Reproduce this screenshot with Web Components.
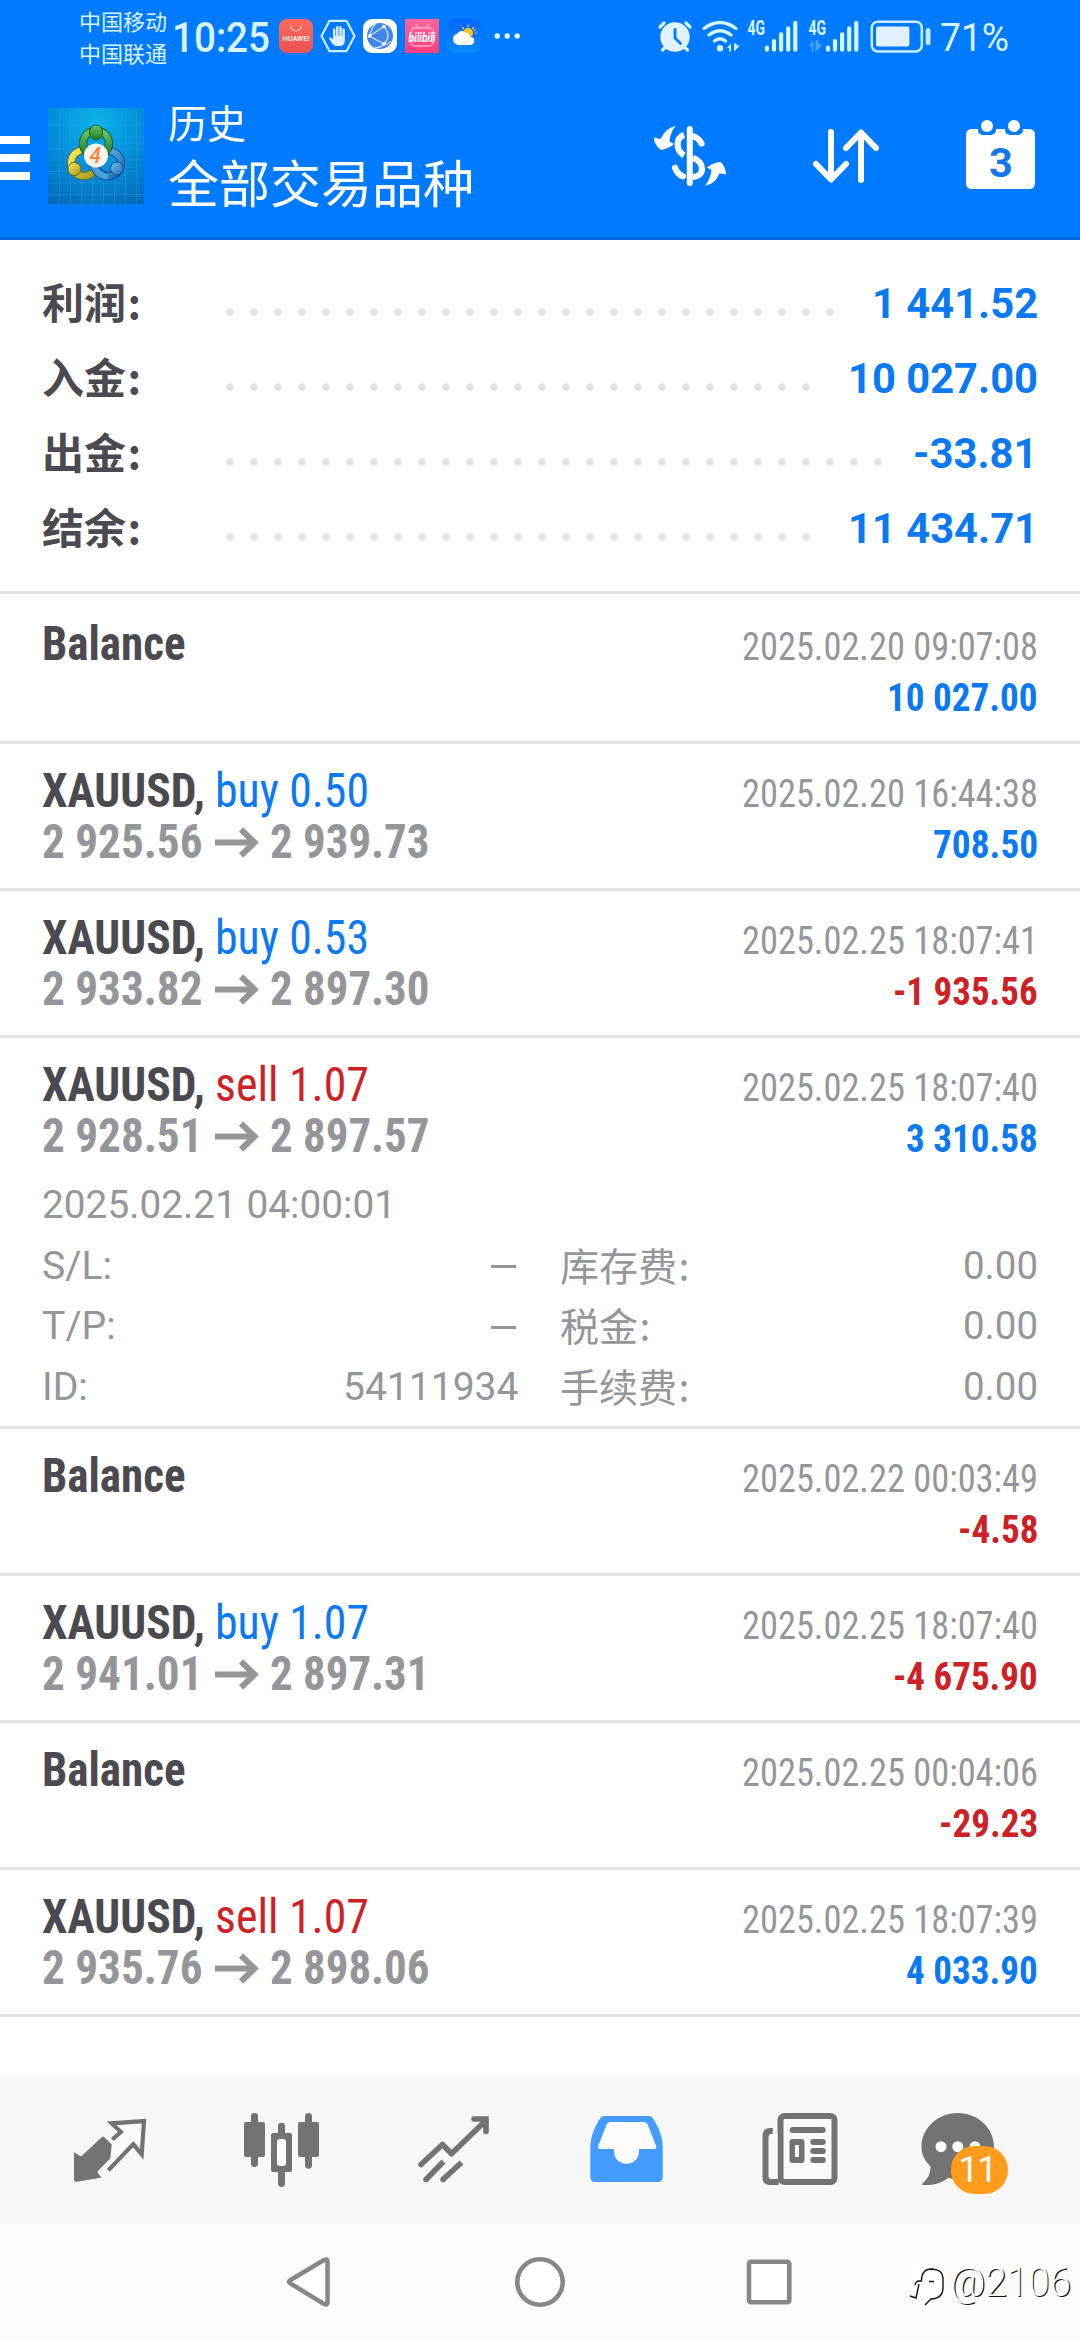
<!DOCTYPE html>
<html lang="zh-CN">
<head>
<meta charset="utf-8">
<title>历史</title>
<style>
html,body{margin:0;padding:0;background:#fff}
body{width:1080px;height:2340px;overflow:hidden;font-family:Roboto,"Noto Sans CJK SC",sans-serif;color:#4b4a50}
</style>
</head>
<body>
<history-app></history-app>
<script>
const def=(name,html,after)=>customElements.define(name,class extends HTMLElement{
  connectedCallback(){
    if(this.shadowRoot)return;
    this.attachShadow({mode:'open'}).innerHTML=typeof html==='function'?html(this):html;
    if(after)after(this);
  }
});

/* Text squeezed horizontally to the advance width given in "w". */
def('fit-text',`<style>
:host{display:block;white-space:pre;flex:none}
span{display:inline-block;transform-origin:0 50%;vertical-align:top}
</style><span><slot></slot></span>`,el=>{
  const s=el.shadowRoot.querySelector('span'),w=+el.getAttribute('w');
  const n=s.getBoundingClientRect().width;
  el.style.width=w+'px';
  s.style.transform=`scaleX(${w/n})`;
});

const bars=x=>[[45.5,0],[39,7.1],[32.3,14.2],[26.3,21.3],[20.7,28.4]].map(([y,d])=>
  `<rect x="${x+d}" y="${y}" width="4.2" height="${51.7-y}" rx="2"/>`).join('');
const S='fill="none" stroke-linecap="round" stroke-linejoin="round"';
const ICONS={
appstore:['279 19 34 34',`<defs><linearGradient id="g" x2="0" y2="1"><stop stop-color="#fa6a5c"/><stop offset="1" stop-color="#ea5355"/></linearGradient></defs><rect x="279" y="19" width="34" height="34" rx="8" fill="url(#g)"/><path d="M290.5 25.5a5.5 5.5 0 0 0 11 0" ${S} stroke="#ffc9c4" stroke-width="1.2"/><text x="282.6" y="40.8" font-size="6.4" font-weight="700" fill="#ffe9e6" textLength="27" lengthAdjust="spacingAndGlyphs">HUAWEI</text>`],
hand:['320 18 36 36',`<path d="M329.5 20.8h17l8 15.2-8 15.2h-17l-8-15.2z" ${S} stroke="#cfeaff" stroke-width="2.2"/><g ${S} stroke="#dff1ff" stroke-width="2.4"><path d="M334.2 29.500v9M337.300 27.300v10M340.500 27.300v10M343.600 29.500v10"/></g><path d="M333 36h11.800v4.500q0 4.500-4 5.500h-5q-3-.5-7-8 1.200-1.800 4.200 1.500z" fill="#dff1ff"/>`],
globe:['363 19 34 34',`<rect x="363" y="19" width="34" height="34" rx="9" fill="#fff"/><circle cx="380" cy="36" r="13" fill="#3f86e8"/><g fill="none" stroke="#d6e8ff" stroke-width="1.1"><path d="M369.500 36L384 26.500M369.500 36L384 44M384 26.500q8 9 0 17.500M376 24q-4 2-6.500 12M384 44q-5 5-9 3M384 44q4 1 7-3"/></g><circle cx="369.500" cy="36" r="1.800" fill="#fff"/><circle cx="384" cy="26.500" r="1.800" fill="#fff"/><circle cx="384" cy="44" r="1.800" fill="#fff"/>`],
bili:['405 19 34 34',`<defs><linearGradient id="g" x2="0" y2="1"><stop stop-color="#f7679c"/><stop offset="1" stop-color="#fb3c7c"/></linearGradient></defs><rect x="405" y="19" width="34" height="34" fill="url(#g)"/><rect x="411" y="28" width="22" height="18" rx="4" fill="none" stroke="#fb96ba" stroke-width="1.800"/><path d="M416 25l3 3M428 25l-3 3" ${S} stroke="#fb96ba" stroke-width="1.800"/><text x="408.500" y="41.500" font-size="13" font-weight="700" font-style="italic" fill="#fff" textLength="27" lengthAdjust="spacingAndGlyphs">bilibili</text>`],
weather:['447 19 34 34',`<defs><linearGradient id="g" x2="0" y2="1"><stop stop-color="#0563ff"/><stop offset="1" stop-color="#0a8dff"/></linearGradient></defs><rect x="447" y="19" width="34" height="34" rx="9" fill="url(#g)"/><circle cx="468" cy="33" r="5" fill="#ffc21f"/><path d="M468 25.200v1.500M473.500 27.500l-1 1M475.500 33h1M473.500 39l-.8-.8M462.500 27.500l1 1M475.200 30l-1 .4" ${S} stroke="#ffcf4d" stroke-width="1.200"/><path d="M458.500 45a5.800 5.800 0 0 1-.8-11.500c1-3 5.500-3.500 7.300-.8 3.500 0 5 2 4.800 4.300 6-.3 6 8 0 8z" fill="#fff"/>`],
more:['494 32 27 8',`<g fill="#e4f5ff"><circle cx="497.200" cy="36" r="2.700"/><circle cx="507.200" cy="36" r="2.700"/><circle cx="517.200" cy="36" r="2.700"/></g>`],
alarm:['657 19 36 35',`<circle cx="675" cy="37" r="14.700" fill="#e2f2ff"/><path d="M660 27l4-4M690 27l-4-4" ${S} stroke="#d2f5ff" stroke-width="3.200"/><path d="M662.500 50l3-3M687.500 50l-3-3" ${S} stroke="#e2f2ff" stroke-width="3.200"/><path d="M675 29.500v8.500l5.500 5.500" ${S} stroke="#007aff" stroke-width="2.800"/>`],
wifi:['701 19 38 34',`<g ${S} stroke="#d2f5ff" stroke-width="3.400"><path d="M703 28.500q16-12 32 0M708 35q11-8.500 22 0M713.500 41q5.500-4.500 11 0"/></g><circle cx="719" cy="48.300" r="3.200" fill="#d2f5ff"/><path d="M726 48l4-4.500v8h-1.800V48zM733 43.500v8l6-6h-3.500v-2z" fill="#d2f5ff"/>`],
sig1:['746 19 52 34',`<g fill="#d2f5ff"><text x="746.500" y="34.800" font-size="20" font-weight="700" textLength="17.500" lengthAdjust="spacingAndGlyphs">4G</text>${bars(763.800)}</g>`],
sig2:['807 19 52 34',`<g fill="#d2f5ff"><text x="807.500" y="34.800" font-size="20" font-weight="700" textLength="17.500" lengthAdjust="spacingAndGlyphs">4G</text>${bars(824.800)}</g><path d="M807.500 46l5-5.500v11h-2V46zM814.500 40.500v11l7-7h-4v-4z" fill="#4aa3ff"/>`],
battery:['869 19 62 35',`<rect x="870.800" y="21.700" width="50" height="29.800" rx="6" fill="none" stroke="#c9eaff" stroke-width="2.500"/><rect x="875" y="26.500" width="33.400" height="20" rx="2" fill="#e2f0ff"/><rect x="924.700" y="28" width="4.800" height="17.300" rx="2.400" fill="#c9eaff"/>`],
menu:['0 134 30 48',`<path d="M0 136h30v8H0zM0 154h30v8H0zM0 172h30v8H0z" fill="#fff"/>`],
logo:['48 108 96 96',`<defs><radialGradient id="g" cx=".5" cy=".15" r="1"><stop stop-color="#0ab4ea"/><stop offset=".45" stop-color="#0590dc"/><stop offset="1" stop-color="#0565b5"/></radialGradient>
<linearGradient id="gr" x2="0" y2="1"><stop stop-color="#72c463"/><stop offset="1" stop-color="#167a2d"/></linearGradient><linearGradient id="ye" x2="1" y2="1"><stop stop-color="#f6ee62"/><stop offset="1" stop-color="#a99312"/></linearGradient><linearGradient id="bl" x2="1" y2="1"><stop stop-color="#7fc4ee"/><stop offset="1" stop-color="#1568b4"/></linearGradient></defs>
<rect x="48" y="108" width="96" height="96" fill="url(#g)"/><path d="M59.500 108v96M70.500 108v96M81.500 108v96M92.500 108v96M103.500 108v96M114.500 108v96M125.500 108v96M136.500 108v96M48 125.500h96M48 137h96M48 148.500h96M48 160h96M48 171.500h96M48 183h96M48 194.500h96" stroke="#2aa6ea" stroke-width=".6" opacity=".6"/>
<g fill="none"><circle cx="108.500" cy="163.500" r="12.500" stroke="#0b4a8b" stroke-width="8"/><circle cx="108.500" cy="163.500" r="12.500" stroke="url(#bl)" stroke-width="6.200"/><circle cx="84" cy="163" r="13" stroke="#6d6610" stroke-width="8"/><circle cx="84" cy="163" r="13" stroke="url(#ye)" stroke-width="6.200"/><circle cx="96" cy="143.500" r="13" stroke="#0c5a28" stroke-width="8"/><circle cx="96" cy="143.500" r="13" stroke="url(#gr)" stroke-width="6.200"/><path d="M93 163q3 13 15.500 13.500" stroke="#0b4a8b" stroke-width="8"/><path d="M93 163q3 13 15.500 13.500" stroke="#4a9fdb" stroke-width="6.200"/></g>
<ellipse cx="96" cy="132.500" rx="6.500" ry="7.500" fill="url(#gr)" stroke="#0d6428"/><circle cx="74.500" cy="169" r="6.500" fill="url(#ye)" stroke="#6d6610"/><circle cx="117" cy="168.500" r="6.500" fill="url(#bl)" stroke="#0b4a8b"/>
<circle cx="96" cy="155.500" r="12" fill="#f7f3f0"/><text x="95.300" y="163" text-anchor="middle" font-size="22" font-weight="500" font-style="italic" fill="#f08a35" textLength="11.500" lengthAdjust="spacingAndGlyphs">4</text>`],
dollar:['652 124 76 64',`<g fill="#fff"><path d="M654 137.500l6.500 1.500q5-11 15-13-5.500 7-6 15.500l4.500 2.500q-5 4.500-13 6-7-5-7-12.500zM726 174.500l-6.500-1.300q-4 10.800-14.500 12.600 5.500-7 6.500-15.800l-4.500-2.500q6-5 13.500-5.500 5 4 5.500 12.500z"/><rect x="686.800" y="126" width="6" height="60" rx="3"/></g><g ${S} stroke="#fff" stroke-width="6.200"><path d="M701.500 143.500q-3.500-6.500-9.500-7.500M675 167.800q2.500 6.500 8 8.500"/><path d="M684 134.800c-8.500 3-8.500 15.500 0 20.500M693 158c12 4 12 18 0 19" stroke-linecap="butt"/></g>`],
sort:['811 127 70 58',`<g ${S} stroke="#fff" stroke-width="6"><path d="M831 132v47M816 164l15 15.500 15-15.500M861 180v-47M846 148l15-15.500 15 15.500"/></g>`],
cal:['964 118 73 73',`<rect x="966" y="129" width="69" height="60" rx="5.500" fill="#fff"/><rect x="978" y="118" width="18" height="17" rx="5" fill="#007aff"/><rect x="1005" y="118" width="18" height="17" rx="5" fill="#007aff"/><circle cx="987" cy="126" r="6" fill="#fff"/><circle cx="1014" cy="126" r="6" fill="#fff"/><text x="1001" y="176.600" text-anchor="middle" font-size="41.500" font-weight="700" fill="#1478ea">3</text>`],
arrow:['215 827 43 31',`<path d="M215 842.500h38.500M241 829.500l13.500 13-13.500 13" fill="none" stroke="#95969a" stroke-width="6"/>`],
trade:['72 2112 77 76',`<path d="M74.500 2153l6.500 4 21-19.500q1-1 2 0l12.500 12q1 1 0 2l-19 19.500q-1 1-.3 2l3.500 4.300-24.200 4q-2 .2-2-1.500z" fill="#737373" stroke="#737373" stroke-width="1" stroke-linejoin="round"/><path d="M112.300 2139.500l8.600-7.500-9.200-8.700 32.300-2.200-2.300 33.200-8.400-10.200-24.300 26.300" fill="#fafafa" stroke="none"/><path d="M112.300 2139.500l8.600-7.500-9.200-8.700 32.300-2.200-2.300 33.200-8.400-10.200-25 26.300" fill="none" stroke="#737373" stroke-width="4.200"/>`],
candles:['242 2111 79 78',`<g fill="#737373"><rect x="251" y="2113" width="7" height="54" rx="3.400"/><rect x="244" y="2122" width="21" height="35" rx="2"/><rect x="278" y="2122.700" width="7" height="64.300" rx="3.400"/><rect x="271" y="2133" width="21" height="39" rx="2"/><rect x="305" y="2113" width="7" height="55.700" rx="3.400"/><rect x="298" y="2122" width="21" height="35" rx="2"/></g><rect x="277" y="2139" width="9" height="27" rx="3" fill="#fff"/>`],
trend:['416 2114 76 72',`<g fill="none" stroke="#737373" stroke-width="5.600"><path d="M421 2164.500l21.500-20 9 9.200 34-33" stroke-linejoin="round" stroke-linecap="round"/><path d="M474 2119h12v12.500" stroke-linecap="round"/><path d="M426 2179.500l17.500-18M443 2179.500l18.500-17"/><path d="M426 2179.500h.01M443 2179.500h.01" stroke-linecap="round"/></g>`],
inbox:['588 2114 77 70',`<path d="M590.300 2148c0-12 5-22 10-30q1.500-2 4-2h44.500q2.500 0 4 2c5 8 10 18 10 30v29q0 5-5 5h-62.500q-5 0-5-5z" fill="#449cff"/><path d="M611 2122h32q3.500 0 5 3.300l8 20.500q1 3.200-2.200 3.200H639v2c0 17-25 17-25 0v-2h-13.500q-3.200 0-2.200-3.200l8-20.500q1.200-3.300 4.700-3.300z" fill="#fcfcfc"/>`],
news:['760 2111 79 76',`<path d="M773 2128l-.5 6h-1q-2.800 0-2.800 3v39q0 3 3 3h7v6h-9q-7.200 0-7.200-7v-42q0-8 7.500-8z" fill="#737373"/><rect x="780.500" y="2116" width="54" height="66" rx="4" fill="#fafafa" stroke="#737373" stroke-width="6"/><path d="M768.700 2176v-38q0-4 3-4h5.900v45h-6q-2.900 0-2.900-3z" fill="#fafafa"/><g fill="#737373"><rect x="789.700" y="2127" width="36" height="6" rx="3"/><rect x="810.300" y="2139" width="15.500" height="6" rx="3"/><rect x="810.300" y="2148" width="15.500" height="6" rx="3"/><rect x="810.300" y="2157" width="15.500" height="6" rx="3"/><rect x="789.500" y="2139" width="15" height="24" rx="3"/></g><rect x="795" y="2145" width="4" height="12" fill="#fafafa"/>`],
chat:['920 2111 90 85',`<path d="M957.800 2113c20 0 36.200 15 36.200 34 0 24-20 36.500-46 31-7 5.500-16 7.500-24.500 7q-3-.5 0-2.500 7-6 7-16c-6-6-9-12-9-19.500 0-19 16.300-34 36.300-34z" fill="#737373"/><g fill="#fff"><circle cx="941" cy="2146.700" r="5.500"/><circle cx="957.800" cy="2146.700" r="5.500"/><circle cx="975" cy="2146.700" r="5.500"/></g><rect x="950.900" y="2146" width="57" height="48" rx="23.500" fill="#ff9c1c"/><text x="978" y="2182.300" text-anchor="middle" font-size="36" fill="#fff" textLength="39" lengthAdjust="spacing">11</text>`],
back:['286 2256 45 52',`<path d="M290.500 2280l33.500-20q3.500-1.500 3.500 1.500v41q0 3-3.500 1.500l-33.500-20.500q-3-1.800 0-3.500z" fill="#fff" stroke="#878787" stroke-width="4.500"/>`],
home:['514 2256 52 52',`<circle cx="540" cy="2282" r="22.700" fill="#fff" stroke="#878787" stroke-width="4.600"/>`],
recent:['745 2258 48 48',`<rect x="749" y="2261.700" width="40.300" height="40.600" rx="2" fill="#fff" stroke="#878787" stroke-width="4.600"/>`],
mark:['905 2260 42 48',`<rect x="907" y="2262" width="37" height="38" rx="15" fill="#fff"/><g fill="none" stroke="#111" stroke-width="1.400"><path d="M915 2285q1-4 4-4h2.500q0-12 10-12h2.500M919 2284l-3 14-6-2M931 2269.500q12-1 12 10v8q0 11-12 11.500l-6 6M929 2281.500h5"/></g>`]
};
def('app-icon',el=>{
  const [vb,body]=ICONS[el.getAttribute('name')],[,,w,h]=vb.split(' ');
  return `<style>:host{display:block;flex:none;width:${w}px;height:${h}px}svg{display:block;overflow:visible;font-family:Roboto,sans-serif}</style><svg width="${w}" height="${h}" viewBox="${vb}">${body}</svg>`;
});

def('status-bar',`<style>
:host{display:flex;height:72px;color:#d8f3ff;align-items:flex-start;box-sizing:border-box;padding:0 71px 0 79px}
.car{font:400 22px/32px "Noto Sans CJK SC",sans-serif;padding-top:4px}
.t{font:500 42px/50px Roboto,sans-serif;padding-top:13px;margin-left:5px}
.icons{display:flex;gap:8px;padding-top:19px;margin-left:9px}
.hand{margin:-1px}
.more{margin:13px 0 0 5px}
.right{display:flex;margin-left:auto;padding-top:19px;gap:9px}
.p{font:400 38.5px/44px Roboto,sans-serif;margin:-3px 0 0 0}
</style>
<div class="car"><fit-text w="88">中国移动</fit-text><fit-text w="88">中国联通</fit-text></div>
<fit-text class="t" w="98">10:25</fit-text>
<div class="icons"><app-icon name="appstore"></app-icon><app-icon class="hand" name="hand"></app-icon><app-icon name="globe"></app-icon><app-icon name="bili"></app-icon><app-icon name="weather"></app-icon><app-icon class="more" name="more"></app-icon></div>
<div class="right"><app-icon name="alarm"></app-icon><app-icon name="wifi" style="margin-right:-2px"></app-icon><app-icon name="sig1"></app-icon><app-icon name="sig2"></app-icon><app-icon name="battery" style="margin-left:1px;margin-right:-1px"></app-icon><fit-text class="p" w="69">71%</fit-text></div>`);

def('title-bar',`<style>
:host{display:flex;height:165px;padding-top:0;color:#fff}
.logo{margin:36px 0 0 18px}.menu{margin-top:62px}
.txt{margin-left:24px;display:flex;flex-direction:column}
.a{font:400 39px/44px "Noto Sans CJK SC",sans-serif;margin-top:27px}
.b{font:400 51px/60px "Noto Sans CJK SC",sans-serif;margin-top:8px}
.acts{margin-left:auto;display:flex;gap:83px;padding-right:43px;align-items:flex-start}
</style>
<app-icon class="menu" name="menu"></app-icon><app-icon class="logo" name="logo"></app-icon>
<div class="txt"><div class="a">历史</div><div class="b">全部交易品种</div></div>
<div class="acts"><app-icon name="dollar" style="margin-top:52px"></app-icon><app-icon name="sort" style="margin-top:55px"></app-icon><app-icon name="cal" style="margin-top:46px"></app-icon></div>`);

/* Advance width of a number: digit, period, space and hyphen each have their own. */
const advance=(t,d,p,s,h)=>[...t].reduce((a,c)=>a+(c==='.'?p:c===' '?s:c==='-'?h:d),0);

def('summary-row',el=>{
  const v=el.getAttribute('value');
  return `<style>
:host{display:flex;height:75px;align-items:center;padding:0 42px}
.l{width:176px;height:75px;font:700 42px/70px "Noto Sans CJK SC",sans-serif;color:#4b4a50}
.c{margin-left:1.5px}
.d{width:${24*el.getAttribute('dots')}px;height:8px;margin-top:16px;background:radial-gradient(circle at 12px 4px,#e4e4e4 3.400px,transparent 4.200px) 0 0/24px 8px}
.v{margin-left:auto;font:700 42px/75px Roboto,sans-serif;color:#0a79f2}
</style><div class="l">${el.getAttribute('label')}<span class="c">:</span></div><div class="d"></div><fit-text class="v" w="${advance(v,23.9,12.5,10.2,16.5)}">${v}</fit-text>`;
});

def('deal-row',el=>{
  const g=n=>el.getAttribute(n),amt=g('amount'),side=g('side');
  return `<style>
:host{display:block;border-bottom:3px solid #e4e4e4}
.m{height:144px;display:flex;justify-content:space-between;padding:0 42px;box-sizing:border-box}
.l{padding-top:21px;font-stretch:75%;font-size:48px;line-height:51px;font-weight:700;color:#4b4a50}
.x,.y{display:flex;height:51px}.y{color:#95969a;align-items:center}
.side{font-weight:400;margin-left:9.500px;color:${side==='buy'?'#0a79f2':'#cc2226'}}
app-icon{margin:2px 12.500px 0 12px}
.r{padding-top:24px;font-stretch:75%;font-size:39.500px;line-height:51px;color:#95969a;display:flex;flex-direction:column;align-items:flex-end}
.amt{font-weight:700;color:${amt[0]==='-'?'#cc2226':'#0a79f2'}}
</style><div class="m"><div class="l">${side?`<div class="x"><fit-text w="163">XAUUSD,</fit-text><fit-text class="side" w="154">${side} ${g('lots')}</fit-text></div><div class="y"><fit-text w="160.500">${g('open')}</fit-text><app-icon name="arrow"></app-icon><fit-text w="159.500">${g('close')}</fit-text></div>`:`<fit-text w="143.500">Balance</fit-text>`}</div>
<div class="r"><fit-text w="296">${g('time')}</fit-text><fit-text class="amt" w="${advance(amt,18.9,10.7,7.6,13)}">${amt}</fit-text></div></div><slot></slot>`;
});

def('deal-details',`<style>
:host{display:flex;flex-direction:column;padding:0 42px;height:244px;box-sizing:border-box;font-size:39.200px;line-height:60.500px;color:#95969a;font-weight:400}
.date{margin-top:-7px}
.g{display:grid;grid-template-columns:476px 478px;gap:0 42px}
.g div{display:flex;justify-content:space-between;height:60.500px}
.cn{font-family:"Noto Sans CJK SC",sans-serif;font-size:39px;line-height:57px}
.cn i{margin-left:1.500px;font-style:normal}
.n{width:25.500px;height:3px;background:#95969a;margin:29.500px 2px 0 0}
</style><fit-text class="date" w="354">2025.02.21 04:00:01</fit-text>
<div class="g">
<div><span>S/L:</span><b class="n"></b></div><div><span class="cn">库存费<i>:</i></span><fit-text w="75">0.00</fit-text></div>
<div><span>T/P:</span><b class="n"></b></div><div><span class="cn">税金<i>:</i></span><fit-text w="75">0.00</fit-text></div>
<div><span>ID:</span><fit-text w="175.500">54111934</fit-text></div><div><span class="cn">手续费<i>:</i></span><fit-text w="75">0.00</fit-text></div>
</div>`);

def('tab-bar',`<style>
:host{display:flex;height:147px;background:#f7f7f7;padding:0 70px 0 72px;box-sizing:border-box;justify-content:flex-start;align-items:flex-start}
</style>
<app-icon name="trade" style="margin-top:35px"></app-icon><app-icon name="candles" style="margin:34px 0 0 93px"></app-icon><app-icon name="trend" style="margin:37px 0 0 95px"></app-icon><app-icon name="inbox" style="margin:37px 0 0 96px"></app-icon><app-icon name="news" style="margin:34px 0 0 95px"></app-icon><app-icon name="chat" style="margin:34px 0 0 81px"></app-icon>`);

def('nav-bar',`<style>
:host{display:flex;height:116px;background:#fcfcfc;padding-left:286px;align-items:flex-start}
.w{font:300 41px/50px Roboto,sans-serif;color:#fff;text-shadow:1.200px .8px 0 #111;margin:33px 0 0 3px}
</style>
<app-icon name="back" style="margin-top:32px"></app-icon><app-icon name="home" style="margin:32px 0 0 183px"></app-icon><app-icon name="recent" style="margin:34px 0 0 179px"></app-icon><app-icon name="mark" style="margin:36px 0 0 112px"></app-icon><fit-text class="w" w="121">@2106</fit-text>`);

def('history-app',`<style>
:host{display:flex;flex-direction:column;width:1080px;height:2340px;background:#fff}
header{background:#007aff;border-bottom:3px solid #0069de;height:237px}
.sum{padding:26px 0 25px;border-bottom:3px solid #e4e4e4}
main{flex:1;padding-top:3px}
</style>
<header><status-bar></status-bar><title-bar></title-bar></header>
<div class="sum"><summary-row label="利润" dots="26" value="1 441.52"></summary-row><summary-row label="入金" dots="25" value="10 027.00"></summary-row><summary-row label="出金" dots="28" value="-33.81"></summary-row><summary-row label="结余" dots="25" value="11 434.71"></summary-row></div>
<main>
<deal-row time="2025.02.20 09:07:08" amount="10 027.00"></deal-row>
<deal-row side="buy" lots="0.50" open="2 925.56" close="2 939.73" time="2025.02.20 16:44:38" amount="708.50"></deal-row>
<deal-row side="buy" lots="0.53" open="2 933.82" close="2 897.30" time="2025.02.25 18:07:41" amount="-1 935.56"></deal-row>
<deal-row side="sell" lots="1.07" open="2 928.51" close="2 897.57" time="2025.02.25 18:07:40" amount="3 310.58"><deal-details></deal-details></deal-row>
<deal-row time="2025.02.22 00:03:49" amount="-4.58"></deal-row>
<deal-row side="buy" lots="1.07" open="2 941.01" close="2 897.31" time="2025.02.25 18:07:40" amount="-4 675.90"></deal-row>
<deal-row time="2025.02.25 00:04:06" amount="-29.23"></deal-row>
<deal-row side="sell" lots="1.07" open="2 935.76" close="2 898.06" time="2025.02.25 18:07:39" amount="4 033.90"></deal-row>
</main>
<tab-bar></tab-bar><nav-bar></nav-bar>`);
</script>
</body>
</html>
